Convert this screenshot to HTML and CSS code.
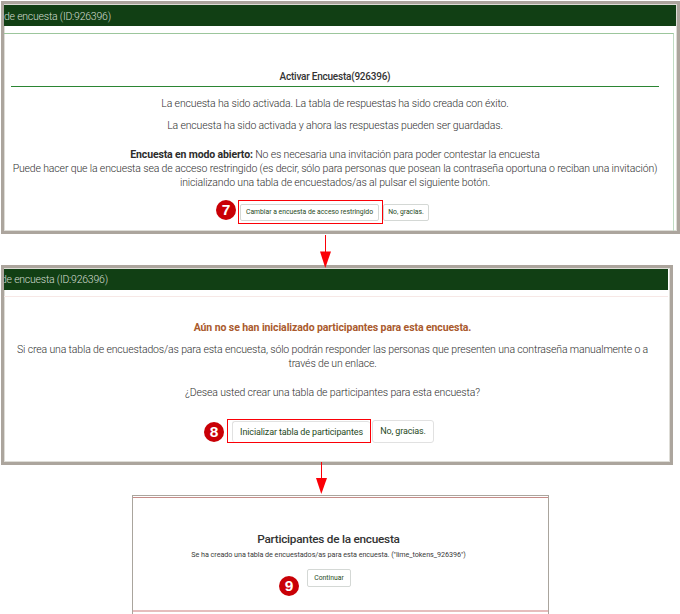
FILE: index.html
```
<!DOCTYPE html>
<html lang="es">
<head>
<meta charset="utf-8">
<title>Activar encuesta</title>
<link rel="stylesheet" href="styles.css">
</head>
<body>
<main class="steps">
  <section class="panel panel-activate">
    <header class="bar">de encuesta (ID:926396)</header>
    <div class="frame">
      <h2 class="title">Activar Encuesta(926396)</h2>
      <p class="line created">La encuesta ha sido activada. La tabla de respuestas ha sido creada con éxito.</p>
      <p class="line saved">La encuesta ha sido activada y ahora las respuestas pueden ser guardadas.</p>
      <p class="line open"><b>Encuesta en modo abierto:</b> No es necesaria una invitación para poder contestar la encuesta</p>
      <p class="line restricted">Puede hacer que la encuesta sea de acceso restringido (es decir, sólo para personas que posean la contraseña oportuna o reciban una invitación)</p>
      <p class="line init">inicializando una tabla de encuestados/as al pulsar el siguiente botón.</p>
      <div class="actions">
        <span class="badge">7</span>
        <span class="highlight"><button class="btn">Cambiar a encuesta de acceso restringido</button></span>
        <button class="btn no">No, gracias.</button>
      </div>
    </div>
  </section>

  <svg class="arrow arrow-one" width="12" height="33" viewBox="0 0 12 33"><path d="M5 0h1v17H5z"/><path d="M0 16.5h11L5.3 33z"/></svg>

  <section class="panel panel-init">
    <header class="bar">de encuesta (ID:926396)</header>
    <div class="content">
      <h2 class="warning">Aún no se han inicializado participantes para esta encuesta.</h2>
      <p class="line note">Si crea una tabla de encuestados/as para esta encuesta, sólo podrán responder las personas que presenten una contraseña manualmente o a</p>
      <p class="line link">través de un enlace.</p>
      <p class="line ask">¿Desea usted crear una tabla de participantes para esta encuesta?</p>
      <div class="actions">
        <span class="badge">8</span>
        <span class="highlight"><button class="btn">Inicializar tabla de participantes</button></span>
        <button class="btn no">No, gracias.</button>
      </div>
    </div>
  </section>

  <svg class="arrow arrow-two" width="12" height="32" viewBox="0 0 12 32"><path d="M5 0h1v17H5z"/><path d="M0 16h11L5.3 32z"/></svg>

  <section class="result">
    <div class="result-body">
      <h1 class="heading">Participantes de la encuesta</h1>
      <p class="line detail">Se ha creado una tabla de encuestados/as para esta encuesta. ("lime_tokens_926396")</p>
      <div class="actions">
        <span class="badge">9</span>
        <button class="btn">Continuar</button>
      </div>
    </div>
  </section>
</main>
</body>
</html>
```

FILE: styles.css
```
* { box-sizing: border-box; }
body {
  margin: 0;
  background: #fff;
  color: #303030;
  font-family: Roboto, "Liberation Sans", sans-serif;
  font-size: 10.5px;
  letter-spacing: -0.145px;
  overflow: hidden;
}
h1, h2, p { margin: 0; }
.steps {
  display: flex;
  flex-direction: column;
  width: 680px;
  height: 614px;
  padding: 1px 0 0 1px;
  overflow: hidden;
}
.panel {
  flex: none;
  border: 3px solid #aca59d;
  box-shadow: inset 0 0 0 1px #deddd7;
}
.panel-activate { width: 679px; height: 233px; padding: 1px 1px 1px 0; }
.panel-init { width: 672px; height: 200px; padding: 1px 2px 1px 0; }
.bar {
  height: 21px;
  background: #113f14;
  color: #d3ddd1;
  font-weight: 300;
  font-size: 10.5px;
  letter-spacing: -0.23px;
  line-height: 23px;
  white-space: nowrap;
  overflow: hidden;
}
.panel-init .bar { text-indent: -3px; line-height: 22px; }
.frame {
  height: 198px;
  margin: 7px 2px 0 0;
  padding: 36px 14px 0 7px;
  border-top: 1px solid #9cc69c;
  border-right: 1px solid #c0dcc3;
}
.title {
  height: 17px;
  border-bottom: 1px solid #2b8533;
  color: #333;
  font-size: 10px;
  letter-spacing: -0.23px;
  font-weight: 500;
  line-height: 14px;
  text-align: center;
}
.line {
  display: flex;
  justify-content: center;
  height: 14px;
  font-weight: 300;
  line-height: 14px;
  white-space: pre;
}
.line b { color: #2c2c2c; font-weight: 700; }
.created { margin-top: 10px; }
.saved { margin-top: 8px; }
.open { margin-top: 15px; }
.actions { display: flex; align-items: flex-start; }
.badge {
  flex: none;
  width: 20px;
  height: 20px;
  border-radius: 50%;
  background: #c90006;
  color: #fff;
  font: bold 15.5px/20px "Liberation Sans", sans-serif;
  letter-spacing: 0;
  text-align: center;
}
.highlight {
  flex: none;
  display: flex;
  border: 1px solid #fb0007;
}
.btn {
  flex: none;
  padding: 0;
  border: 1px solid #d4d8d5;
  border-radius: 2px;
  background: #fff;
  color: #1f4a24;
  font: 400 6.8px/15px Roboto, sans-serif;
  letter-spacing: 0;
  white-space: nowrap;
}
.panel-activate .actions { margin: 10px 0 0 205px; }
.panel-activate .highlight { width: 145px; height: 24px; margin-left: 2px; padding: 3px 0 0 1px; }
.panel-activate .highlight .btn { width: 139px; height: 17px; }
.panel-activate .no { width: 46px; height: 17px; margin-top: 4px; }

.arrow { display: block; flex: none; fill: #fb0007; position: relative; z-index: 1; }
.arrow-one { margin: 1px 0 -3px 319px; }
.arrow-two { margin: -3px 0 0 315px; }

.content {
  height: 172px;
  margin-top: 6px;
  padding: 24px 7px 0 0;
  border-top: 1px solid #f7e8e6;
}
.warning {
  height: 14px;
  color: #aa5a2d;
  font-size: 10.5px;
  letter-spacing: -0.09px;
  font-weight: 700;
  line-height: 14px;
  text-align: center;
}
.note { margin-top: 8px; }
.ask { margin-top: 15px; }
.panel-init .actions { margin: 19px 0 0 200px; }
.panel-init .badge { margin-top: 3px; }
.panel-init .highlight { width: 144px; height: 24px; margin-left: 3px; padding: 1px 0 0 4px; }
.panel-init .btn { font-size: 9px; letter-spacing: -0.13px; line-height: 21px; border-color: #e1e1e1; border-radius: 3px; }
.panel-init .highlight .btn { width: 138px; height: 21px; border-right: 0; border-bottom: 0; }
.panel-init .no { width: 62px; height: 23px; margin: 1px 0 0 1px; }

.result {
  flex: none;
  width: 417px;
  height: 119px;
  margin: 1px 0 0 131px;
  border: 1px solid #aaa59d;
  border-bottom: 0;
  padding-top: 1px;
}
.result-body {
  height: 115px;
  padding: 33px 24px 0 0;
  border-top: 1px solid #c58c88;
  border-bottom: 2px solid #e5bdbd;
}
.heading {
  height: 16px;
  color: #333;
  font-size: 11.8px;
  letter-spacing: -0.26px;
  font-weight: 500;
  line-height: 16px;
  text-align: center;
}
.detail { height: 12px; margin-top: 2px; color: #3a3a3a; font-size: 7.2px; letter-spacing: -0.04px; font-weight: 400; line-height: 12px; }
.result .actions { margin: 8px 0 0 146px; }
.result .badge { margin-top: 7px; }
.result .btn { width: 44px; height: 18px; margin-left: 8px; line-height: 16px; }
```
